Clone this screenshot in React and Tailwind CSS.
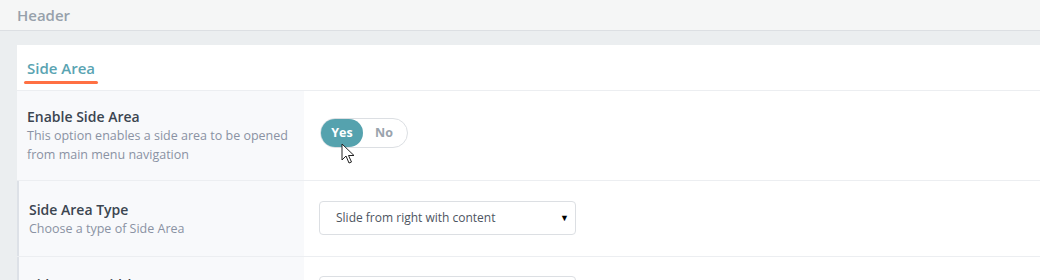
import React, { useState } from 'react';

const font = { fontFamily: '"Open Sans", "Noto Sans", sans-serif' };

const Cursor = () => (
  <svg width="14" height="22" viewBox="0 0 14 22" className="absolute left-[20px] top-[24px]">
    <path d="M1 1 L1 17 L5 13 L8 20 L10.5 19 L7.5 12.5 L13 12.5 Z" fill="#fff" stroke="#222" strokeWidth="1" strokeLinejoin="round" />
  </svg>
);

const App = () => {
  const [enabled, setEnabled] = useState(true);

  return (
    <div className="w-[1040px] h-[280px] overflow-hidden bg-[#ebeef0]" style={font}>
      <div className="h-[31px] bg-[#f5f6f6] border-b border-[#dcdfe3] flex items-center px-[17px]">
        <span className="text-[15px] font-semibold text-[#97a1ab]">Header</span>
      </div>

      <div className="ml-[17px] mt-[14px] bg-white">
        <div className="h-[46px] border-b border-[#eceef1] px-[7px] pt-[11px]">
          <div className="inline-block">
            <span className="block px-[3px] text-[15px] font-semibold text-[#5aa4b2] leading-[21px]">Side Area</span>
            <div className="h-[3px] mt-[2px] rounded-full bg-[#ff7043]"></div>
          </div>
        </div>

        <div className="flex h-[90px] border-b border-[#eceef1]">
          <div className="w-[287px] bg-[#f8f9fb] px-[10px] pt-[16px]">
            <div className="text-[14px] font-semibold text-[#3b4550] leading-[19px]">Enable Side Area</div>
            <div className="text-[12.5px] text-[#8a92a3] leading-[19px]">
              This option enables a side area to be opened from main menu navigation
            </div>
          </div>
          <div className="flex-1 pl-[16px] pt-[27px]">
            <div className="relative inline-flex h-[30px] w-[88px] rounded-full border border-[#dcdfe3] bg-white">
              <button
                onClick={() => setEnabled(true)}
                className={`w-[42px] h-[28px] rounded-full text-[12.5px] font-bold ${enabled ? 'bg-[#55a2ae] text-white' : 'text-[#9aa3ad]'}`}
              >
                Yes
              </button>
              <button
                onClick={() => setEnabled(false)}
                className={`w-[42px] h-[28px] rounded-full text-[12.5px] font-bold ${!enabled ? 'bg-[#55a2ae] text-white' : 'text-[#9aa3ad]'}`}
              >
                No
              </button>
              <Cursor />
            </div>
          </div>
        </div>

        <div className="flex h-[76px] border-b border-[#eceef1]">
          <div className="w-[287px] bg-[#f8f9fb] border-l-2 border-[#dde1e7] px-[10px] pt-[19px]">
            <div className="text-[14px] font-semibold text-[#3b4550] leading-[19px]">Side Area Type</div>
            <div className="text-[12.5px] text-[#8a92a3] leading-[19px]">Choose a type of Side Area</div>
          </div>
          <div className="flex-1 pl-[15px] pt-[20px]">
            <div className="w-[257px] h-[34px] rounded-[4px] border border-[#dcdfe3] flex items-center justify-between pl-[16px] pr-[6px]">
              <span className="text-[12px] text-[#4d5561]">Slide from right with content</span>
              <span className="text-[9px] text-black">▼</span>
            </div>
          </div>
        </div>

        <div className="flex h-[60px]">
          <div className="w-[287px] bg-[#f8f9fb] border-l-2 border-[#dde1e7] px-[10px] pt-[18px]">
            <div className="text-[14px] font-semibold text-[#3b4550] leading-[19px]">Side Area Width</div>
          </div>
          <div className="flex-1 pl-[15px] pt-[19px]">
            <div className="w-[257px] h-[34px] rounded-[4px] border border-[#dcdfe3]"></div>
          </div>
        </div>
      </div>
    </div>
  );
};

export default App;
